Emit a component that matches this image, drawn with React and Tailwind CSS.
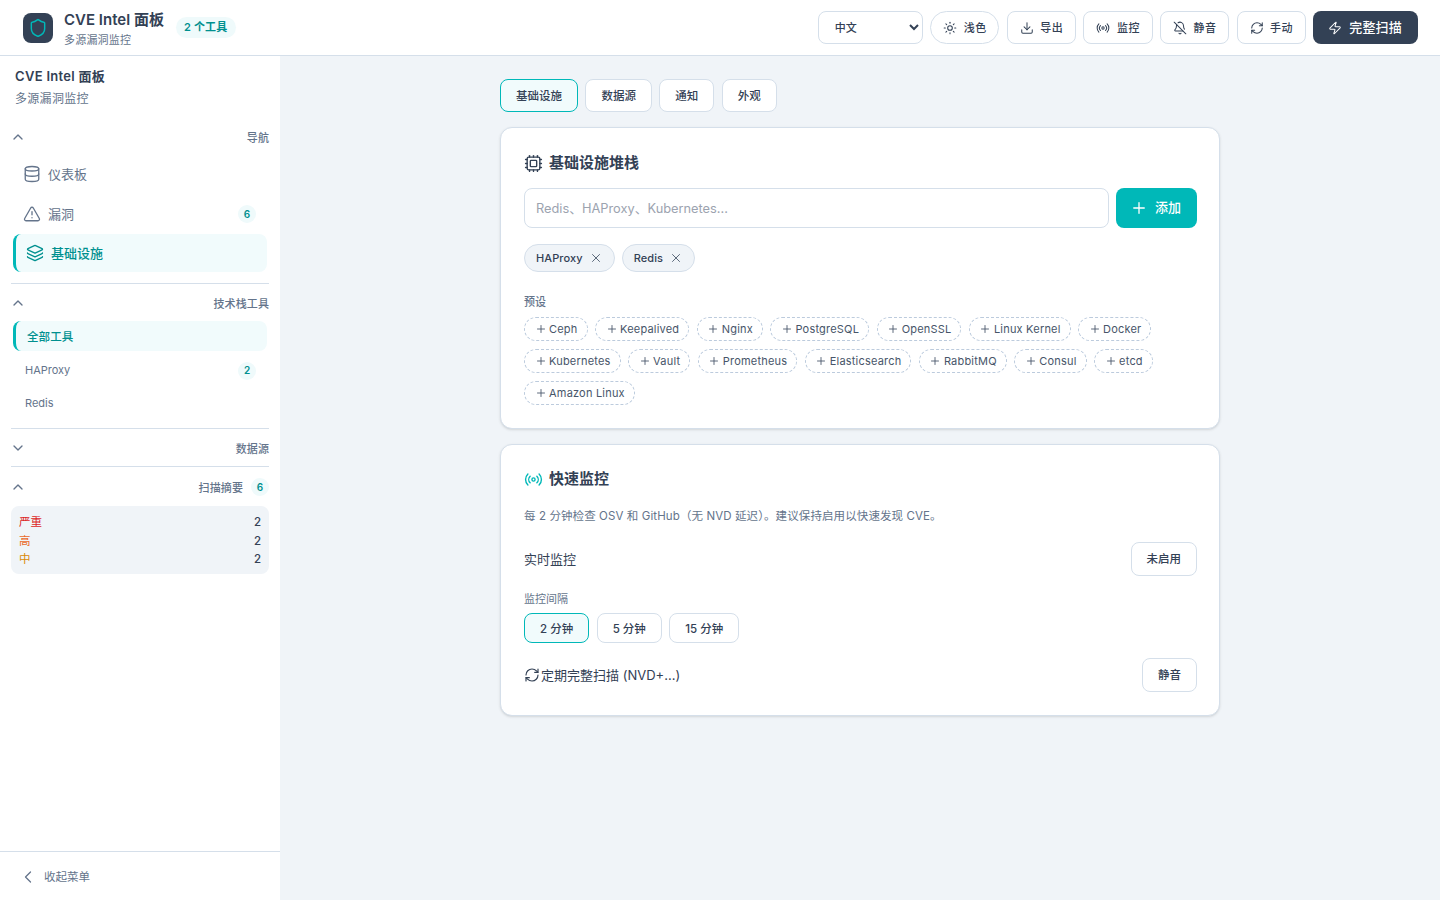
import {
  BellOff,
  ChevronDown,
  ChevronLeft,
  ChevronUp,
  Cpu,
  Database,
  Download,
  Layers,
  Plus,
  Radio,
  RefreshCw,
  Shield,
  Sun,
  TriangleAlert,
  X,
  Zap,
} from "lucide-react";

const FONT = "font-['Inter','Noto_Sans_CJK_SC',sans-serif]";

const presets = [
  "Ceph",
  "Keepalived",
  "Nginx",
  "PostgreSQL",
  "OpenSSL",
  "Linux Kernel",
  "Docker",
  "Kubernetes",
  "Vault",
  "Prometheus",
  "Elasticsearch",
  "RabbitMQ",
  "Consul",
  "etcd",
  "Amazon Linux",
];

function HeaderButton({ icon: Icon, label, round }) {
  return (
    <button
      className={`flex h-[33px] items-center gap-[6.5px] border border-[#d5dfea] bg-white pl-[12px] pr-[11.6px] text-[11px] font-medium tracking-[0.5px] text-[#334155] ${
        round ? "rounded-full" : "rounded-[8px]"
      }`}
    >
      <Icon size={14} strokeWidth={1.75} />
      <span className="pt-[1px]">{label}</span>
    </button>
  );
}

function SectionHead({ label, open = true, badge }) {
  const Icon = open ? ChevronUp : ChevronDown;
  return (
    <div className="flex h-[20px] items-center justify-between">
      <Icon size={16} className="-ml-[1px] text-[#64748b]" />
      <div className="flex items-center gap-[8px] text-[11px] font-medium tracking-[0.1px] text-[#64748b]">
        <span className="pt-[2px]">{label}</span>
        {badge && <Count value={badge} />}
      </div>
    </div>
  );
}

function Count({ value }) {
  return (
    <span className="flex h-[18px] w-[18px] items-center justify-center rounded-full bg-[#effafb] text-[10px] font-semibold tracking-normal text-[#00908f]">
      {value}
    </span>
  );
}

function Tab({ label, active }) {
  return (
    <button
      className={`h-[33px] rounded-[8px] border px-[15px] pt-[2px] text-[11.5px] font-medium text-[#334155] ${
        active ? "border-[#00b8b8] bg-[#f1fbfc]" : "border-[#d5dfea] bg-white"
      }`}
    >
      {label}
    </button>
  );
}

function Interval({ label, active }) {
  return (
    <button
      className={`h-[30px] rounded-[8px] border px-[15px] pt-[3px] text-[11.5px] font-medium text-[#334155] ${
        active ? "border-[#00b8b8] bg-[#f1fbfc]" : "border-[#d5dfea] bg-white"
      }`}
    >
      {label}
    </button>
  );
}

function Chip({ label }) {
  return (
    <span className="flex h-[28px] items-center gap-[6px] rounded-full border border-[#d5dfea] bg-[#f0f4f8] pl-[11px] pr-[11px] text-[11px] font-medium tracking-[0.1px] text-[#334155]">
      <span className="pt-[1px]">{label}</span>
      <X size={14} strokeWidth={1.5} className="text-[#475569]" />
    </span>
  );
}

export default function App() {
  return (
    <div className={`flex h-screen flex-col overflow-hidden bg-[#f0f4f8] ${FONT}`}>
      {/* Top bar */}
      <header className="flex h-[56px] shrink-0 items-center justify-between border-b border-[#d5dfea] bg-white pl-[23px] pr-[22px]">
        <div className="flex items-center">
          <div className="flex h-[30px] w-[30px] items-center justify-center rounded-[8px] bg-[#334155]">
            <Shield size={20} strokeWidth={1.75} className="text-[#00b8b8]" />
          </div>
          <div className="ml-[11px] pt-[2px]">
            <div className="text-[15px] font-semibold leading-[21px] text-[#334155]">CVE Intel 面板</div>
            <div className="mt-[2px] text-[11px] leading-[16px] tracking-[0.2px] text-[#64748b]">多源漏洞监控</div>
          </div>
          <span className="ml-[12px] flex h-[21px] items-center rounded-full bg-[#effafb] px-[8px] text-[11px] font-semibold tracking-[0.2px] text-[#00908f]">
            2 个工具
          </span>
        </div>
        <div className="flex items-center gap-[7.5px]">
          <select className="h-[33px] w-[105px] rounded-[8px] border border-[#d5dfea] bg-white pl-[12px] text-[11px] font-medium text-[#334155]">
            <option>中文</option>
          </select>
          <HeaderButton icon={Sun} label="浅色" round />
          <HeaderButton icon={Download} label="导出" />
          <HeaderButton icon={Radio} label="监控" />
          <HeaderButton icon={BellOff} label="静音" />
          <HeaderButton icon={RefreshCw} label="手动" />
          <button className="flex h-[33px] items-center gap-[7px] rounded-[8px] bg-[#334155] pl-[15px] pr-[16px] text-[13px] font-medium tracking-[0.2px] text-white">
            <Zap size={14} strokeWidth={1.75} />
            完整扫描
          </button>
        </div>
      </header>

      <div className="flex min-h-0 flex-1">
        {/* Sidebar */}
        <aside className="flex w-[280px] shrink-0 flex-col bg-white">
          <div className="flex-1 px-[11px]">
            <div className="px-[4px] pt-[11px]">
              <div className="text-[13px] font-semibold leading-[18px] tracking-[0.3px] text-[#334155]">CVE Intel 面板</div>
              <div className="mt-[5px] text-[12px] leading-[18px] tracking-[0.3px] text-[#64748b]">多源漏洞监控</div>
            </div>

            <div className="mt-[19px]">
              <SectionHead label="导航" />
              <nav className="mt-[7px]">
                <div className="flex h-[40px] items-center gap-[7px] pl-[12px] pr-[13px] text-[13px] text-[#64748b]">
                  <Database size={18} strokeWidth={1.75} />
                  <span className="pt-[1px]">仪表板</span>
                </div>
                <div className="flex h-[40px] items-center gap-[7px] pl-[12px] pr-[13px] text-[13px] text-[#64748b]">
                  <TriangleAlert size={18} strokeWidth={1.75} />
                  <span className="flex-1 pt-[1px]">漏洞</span>
                  <Count value="6" />
                </div>
                <div className="mx-[2px] flex h-[38px] w-[254px] items-center gap-[7px] rounded-[8px] border-l-[3px] border-[#00b8b8] bg-[#f1fbfc] pl-[10px] text-[13px] font-medium text-[#00908f]">
                  <Layers size={18} strokeWidth={1.75} />
                  <span className="pt-[1px]">基础设施</span>
                </div>
              </nav>
            </div>

            <div className="mt-[11px] border-t border-[#d5dfea] pt-[9px]">
              <SectionHead label="技术栈工具" />
              <div className="mt-[8px]">
                <div className="mx-[2px] flex h-[30px] w-[254px] items-center rounded-[8px] border-l-[3px] border-[#00b8b8] bg-[#f1fbfc] pl-[11px] pt-[3px] text-[11.5px] font-medium tracking-[0.1px] text-[#00908f]">
                  全部工具
                </div>
                <div className="mt-[3px] flex h-[33px] items-center justify-between pl-[14px] pr-[13px] text-[11px] text-[#64748b]">
                  HAProxy
                  <Count value="2" />
                </div>
                <div className="flex h-[33px] items-center pl-[14px] text-[11px] text-[#64748b]">Redis</div>
              </div>
            </div>

            <div className="mt-[8px] border-t border-[#d5dfea] pb-[8px] pt-[9px]">
              <SectionHead label="数据源" open={false} />
            </div>

            <div className="border-t border-[#d5dfea] pt-[10px]">
              <SectionHead label="扫描摘要" badge="6" />
              <div className="mt-[9px] rounded-[8px] bg-[#f0f4f8] px-[8px] pb-[5px] pt-[7px] text-[11.5px] leading-[18.5px]">
                <div className="flex justify-between">
                  <span className="text-[#dc2626]">严重</span>
                  <span className="font-medium text-[#334155]">2</span>
                </div>
                <div className="flex justify-between">
                  <span className="text-[#ea6a2a]">高</span>
                  <span className="font-medium text-[#334155]">2</span>
                </div>
                <div className="flex justify-between">
                  <span className="text-[#d98a0a]">中</span>
                  <span className="font-medium text-[#334155]">2</span>
                </div>
              </div>
            </div>
          </div>

          <div className="flex h-[49px] items-center gap-[6px] border-t border-[#d5dfea] pl-[18px] pt-[2px] text-[11.5px] text-[#64748b]">
            <ChevronLeft size={20} strokeWidth={1.5} />
            <span className="pt-[2px]">收起菜单</span>
          </div>
        </aside>

        {/* Settings */}
        <main className="min-w-0 flex-1 overflow-hidden">
          <div className="mx-auto w-[720px] pt-[23px]">
            <div className="flex gap-[7.4px]">
              <Tab label="基础设施" active />
              <Tab label="数据源" />
              <Tab label="通知" />
              <Tab label="外观" />
            </div>

            <section className="mt-[15px] rounded-[12px] border border-[#d5dfea] bg-white pb-[23px] pl-[23px] pr-[22px] pt-[24px] shadow-sm">
              <div className="flex items-center gap-[6px] text-[15px] font-semibold leading-[22px] text-[#334155]">
                <Cpu size={19} strokeWidth={1.75} />
                基础设施堆栈
              </div>
              <div className="mt-[14px] flex gap-[7px]">
                <input
                  placeholder="Redis、HAProxy、Kubernetes..."
                  className="h-[40px] flex-1 rounded-[8px] border border-[#d5dfea] px-[11px] text-[12.8px] text-[#334155] placeholder:text-[#9ca3af]"
                />
                <button className="flex h-[40px] w-[81px] items-center justify-center gap-[7px] rounded-[8px] bg-[#00b8b8] pr-[2px] text-[13px] font-medium text-white">
                  <Plus size={18} strokeWidth={1.75} />
                  添加
                </button>
              </div>
              <div className="mt-[16px] flex gap-[7px]">
                <Chip label="HAProxy" />
                <Chip label="Redis" />
              </div>
              <div className="mt-[22px] text-[11px] font-medium leading-[16px] text-[#64748b]">预设</div>
              <div className="mt-[7px] flex flex-wrap gap-x-[7.5px] gap-y-[8px]">
                {presets.map((name) => (
                  <span
                    key={name}
                    className="flex h-[24px] items-center gap-[2.5px] rounded-full border border-dashed border-[#bccbdd] pl-[9.5px] pr-[9px] text-[11px] tracking-[0.2px] text-[#475569]"
                  >
                    <Plus size={12} strokeWidth={1.75} />
                    <span className="pt-[1px]">{name}</span>
                  </span>
                ))}
              </div>
            </section>

            <section className="mt-[15px] rounded-[12px] border border-[#d5dfea] bg-white pb-[23px] pl-[23px] pr-[22px] pt-[23px] shadow-sm">
              <div className="flex items-center gap-[6px] text-[15px] font-semibold leading-[22px] text-[#334155]">
                <Radio size={19} strokeWidth={1.75} className="text-[#00b8b8]" />
                快速监控
              </div>
              <p className="mt-[18px] text-[11.5px] leading-[16px] tracking-[0.1px] text-[#64748b]">
                每 2 分钟检查 OSV 和 GitHub（无 NVD 延迟）。建议保持启用以快速发现 CVE。
              </p>
              <div className="mt-[18px] flex items-center justify-between">
                <span className="pt-[2px] text-[13px] text-[#334155]">实时监控</span>
                <button className="h-[34px] rounded-[8px] border border-[#d5dfea] px-[15px] pt-[1px] text-[11.5px] font-medium text-[#334155]">
                  未启用
                </button>
              </div>
              <div className="mt-[15px] text-[11px] leading-[16px] text-[#64748b]">监控间隔</div>
              <div className="mt-[6px] flex gap-[7.5px]">
                <Interval label="2 分钟" active />
                <Interval label="5 分钟" />
                <Interval label="15 分钟" />
              </div>
              <div className="mt-[15px] flex items-center justify-between">
                <span className="flex items-center gap-[1px] text-[13px] text-[#334155]">
                  <RefreshCw size={16} strokeWidth={1.75} />
                  <span className="pt-[2px]">定期完整扫描 (NVD+...)</span>
                </span>
                <button className="h-[34px] rounded-[8px] border border-[#d5dfea] px-[15px] pt-[2px] text-[11.5px] font-medium text-[#334155]">
                  静音
                </button>
              </div>
            </section>
          </div>
        </main>
      </div>
    </div>
  );
}
